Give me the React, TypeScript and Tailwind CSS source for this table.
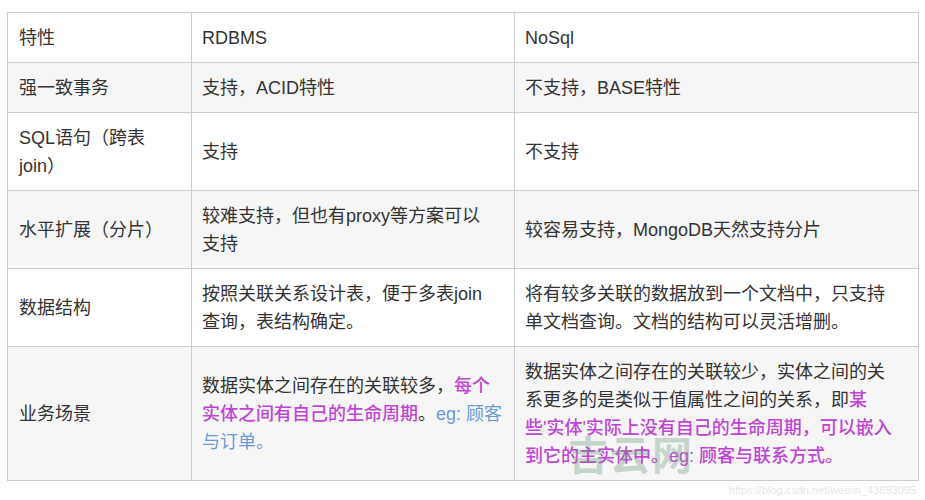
import React from "react";

type Row = {
  name: React.ReactNode;
  rdbms: React.ReactNode;
  nosql: React.ReactNode;
};

const purple = "font-medium text-[#bf45d5]";
const blue = "text-[#6b9ad9]";

const rows: Row[] = [
  { name: "特性", rdbms: "RDBMS", nosql: "NoSql" },
  { name: "强一致事务", rdbms: "支持，ACID特性", nosql: "不支持，BASE特性" },
  { name: "SQL语句（跨表join）", rdbms: "支持", nosql: "不支持" },
  {
    name: "水平扩展（分片）",
    rdbms: (
      <>
        较难支持，但也有proxy等方案可以
        <br />
        支持
      </>
    ),
    nosql: "较容易支持，MongoDB天然支持分片",
  },
  {
    name: "数据结构",
    rdbms: (
      <>
        按照关联关系设计表，便于多表join
        <br />
        查询，表结构确定。
      </>
    ),
    nosql: "将有较多关联的数据放到一个文档中，只支持单文档查询。文档的结构可以灵活增删。",
  },
  {
    name: "业务场景",
    rdbms: (
      <>
        数据实体之间存在的关联较多，<span className={purple}>每个</span>
        <br />
        <span className={purple}>实体之间有自己的生命周期</span>。
        <span className={blue}>eg: 顾客</span>
        <br />
        <span className={blue}>与订单。</span>
      </>
    ),
    nosql: (
      <>
        数据实体之间存在的关联较少，实体之间的关系更多的是类似于值属性之间的关系，即
        <span className={purple}>
          某些'实体'实际上没有自己的生命周期，可以嵌入到它的主实体中。eg: 顾客与联系方式。
        </span>
      </>
    ),
  },
];

export default function App() {
  return (
    <div
      className="relative h-[500px] w-[925px] bg-white pl-[7px] pt-[12px] text-[18px] leading-[28px] text-[#333]"
      style={{ fontFamily: '"Liberation Sans", "Noto Sans CJK SC", sans-serif' }}
    >
      <table className="w-[911px] table-fixed border-collapse border border-[#cdcdcd]">
        <colgroup>
          <col className="w-[184px]" />
          <col className="w-[323px]" />
          <col className="w-[404px]" />
        </colgroup>
        <tbody>
          {rows.map((r, i) => (
            <tr key={i} className={i % 2 === 1 ? "bg-[#f6f6f6]" : "bg-white"}>
              <td className="border border-[#cdcdcd] pb-[10px] pl-[11px] pr-[10px] pt-[11px] align-middle">
                {r.name}
              </td>
              <td className="whitespace-nowrap border border-[#cdcdcd] pb-[10px] pl-[10px] pr-[8px] pt-[11px] align-middle">
                {r.rdbms}
              </td>
              <td className="border border-[#cdcdcd] pb-[10px] pl-[10px] pr-[16px] pt-[11px] align-middle">
                {r.nosql}
              </td>
            </tr>
          ))}
        </tbody>
      </table>
      <div className="pr-[9px] pt-[2px] text-right text-[11px] leading-[14px] text-[#e6e6e6]">
        https://blog.csdn.net/weixin_43693095
      </div>
      <div className="pointer-events-none absolute left-[568px] top-[432px] text-[40px] font-bold leading-[48px] tracking-[2px] text-[#6f9a7e] opacity-35">
        吉云网
      </div>
    </div>
  );
}
